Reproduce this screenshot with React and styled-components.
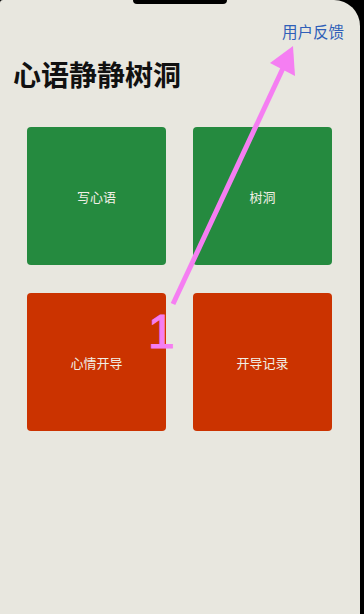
import React from 'react'
import styled, { createGlobalStyle } from 'styled-components'

const GlobalStyle = createGlobalStyle`
  html, body {
    margin: 0;
    padding: 0;
    background: #000;
  }
  body {
    font-family: "Noto Sans CJK SC", "Noto Sans", sans-serif;
  }
`

const tiles = [
  { label: '写心语', tone: 'green' },
  { label: '树洞', tone: 'green' },
  { label: '心情开导', tone: 'red' },
  { label: '开导记录', tone: 'red' },
]

const App = () => {
  return (
    <>
      <GlobalStyle />
      <Frame>
        <Screen>
          <Notch />
          <TopBar>
            <FeedbackLink>用户反馈</FeedbackLink>
          </TopBar>
          <Title>心语静静树洞</Title>
          <Grid>
            {tiles.map((t) => (
              <Tile key={t.label} $tone={t.tone}>{t.label}</Tile>
            ))}
          </Grid>

          {/* annotation drawn over the screenshot */}
          <Annotation viewBox="0 0 364 614" width="364" height="614">
            <line x1="173" y1="304" x2="284" y2="66" stroke="#f57ef2" strokeWidth="5" />
            <polygon points="293,46 270,63 295,76" fill="#f57ef2" />
          </Annotation>
          <StepMark>1</StepMark>
        </Screen>
      </Frame>
    </>
  )
}

const Frame = styled.div`
  width: 364px;
  height: 614px;
  background: #000;
  overflow: hidden;
`
const Screen = styled.div`
  position: relative;
  width: 360px;
  height: 614px;
  background: #e8e7df;
  border-top-right-radius: 26px;
  border-top-left-radius: 3px;
  display: flex;
  flex-direction: column;
`
const Notch = styled.div`
  position: absolute;
  top: 0;
  left: 133px;
  width: 94px;
  height: 4px;
  background: #000;
  border-radius: 0 0 10px 10px;
`
const TopBar = styled.div`
  display: flex;
  justify-content: flex-end;
  padding: 20px 16px 0 0;
`
const FeedbackLink = styled.span`
  color: #2f5fb8;
  font-size: 15.5px;
  line-height: 22px;
`
const Title = styled.h1`
  margin: 12px 0 0 13px;
  font-size: 28px;
  line-height: 40px;
  font-weight: 700;
  color: #111;
`
const Grid = styled.div`
  display: grid;
  grid-template-columns: 139px 139px;
  grid-auto-rows: 138px;
  column-gap: 27px;
  row-gap: 28px;
  padding: 0 0 0 27px;
  margin-top: 33px;
`
const Tile = styled.div`
  display: flex;
  align-items: center;
  justify-content: center;
  border-radius: 4px;
  background: ${(p) => (p.$tone === 'green' ? '#258a3f' : '#cb3300')};
  color: #f2efe6;
  font-size: 13px;
`
const Annotation = styled.svg`
  position: absolute;
  top: 0;
  left: 0;
  pointer-events: none;
`
const StepMark = styled.div`
  position: absolute;
  left: 148px;
  top: 302px;
  color: #f57ef2;
  font-family: "Liberation Sans", Arial, sans-serif;
  font-size: 48px;
  font-weight: 500;
  line-height: 60px;
  -webkit-text-stroke: 1px #f57ef2;
`

export default App
